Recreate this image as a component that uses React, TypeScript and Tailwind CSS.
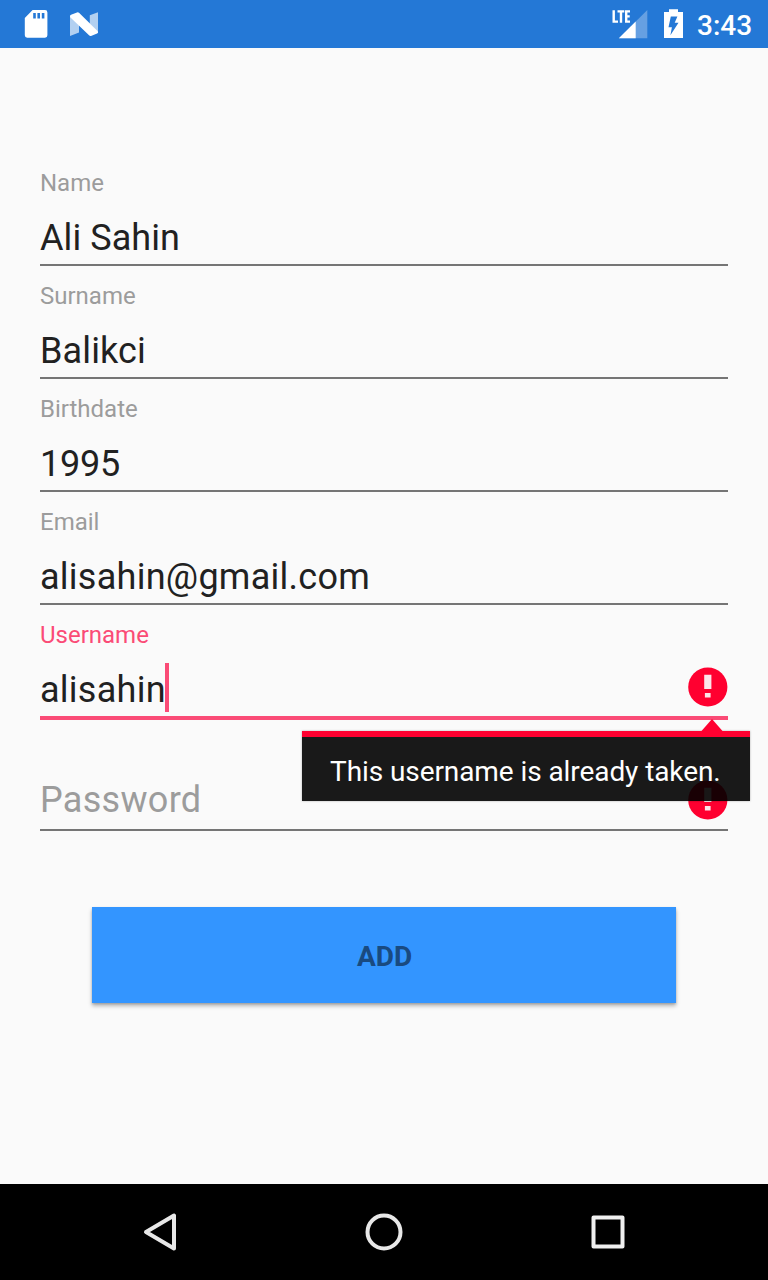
import React from "react";

function StatusBar() {
  return (
    <header className="flex h-12 shrink-0 items-center bg-[#2478d6] text-white">
      <svg className="h-12 w-[130px]" viewBox="0 0 130 48" aria-hidden="true">
        <path
          fill="#fff"
          fillRule="evenodd"
          d="M32.6 10H45a2.4 2.4 0 0 1 2.4 2.4v22.9a2.4 2.4 0 0 1-2.4 2.4H27.2a2.4 2.4 0 0 1-2.4-2.4V18zM33.2 13v5.4h2.6V13zm4.2 0v5.4H40V13zm4.4 0v5.4h2.6V13z"
        />
        <path fill="#fff" fillOpacity=".65" d="M70 16 79 25v7.4L70 36zM98 12.2v20.2L89.800 24v-8.700z" />
        <path fill="#fff" d="M70.200 17.200q-.9-1.700.8-2.500l6-2.300q1.200-.4 2 .4L97.800 31.200q.9 1.700-.7 2.400l-6.100 2.300q-1 .3-1.700-.4z" />
      </svg>
      <div className="flex-1" />
      <svg className="h-12 w-[97px]" viewBox="600 0 97 48" aria-hidden="true">
        <path fill="#fff" fillOpacity=".3" d="M647.300 10v28.200H619z" />
        <path fill="#fff" d="M635.700 21.600v16.600H618.800z" />
        <path
          fill="none"
          stroke="#fff"
          strokeWidth="2.400"
          d="M613.700 10.200v11.400h4.300M617.500 11.400h6.800M621 11.400v11.400M630 11.400h-3.800v10.200h3.800M626 16.400h3.700"
        />
        <path
          fill="#fff"
          fillRule="evenodd"
          d="M669 9.200h9v2.900h5V38h-19V12.100h5zM670.800 16.600l-2.300 10.600h3.400l-1.500 8 8.100-12.500h-3.800l2.700-6.100z"
        />
      </svg>
      <span className="relative top-[1px] w-[71px] text-[28px] leading-[33px] font-medium">3:43</span>
    </header>
  );
}

function ErrorIcon() {
  return (
    <svg className="absolute right-0 bottom-[9px] size-10" viewBox="0 0 40 40" aria-label="Error">
      <circle cx="19.800" cy="20" r="19.600" fill="#ff0030" />
      <path fill="#fde4e9" d="M16.200 7.800h7.200v14.200h-7.200zM16.900 26.100h5.700v4.400h-5.700z" />
    </svg>
  );
}

function Field({ label, value, tracking = "" }: { label: string; value: string; tracking?: string }) {
  return (
    <div className="h-[113px] border-b-2 border-[#757575] pt-4">
      <div className="text-[24px] leading-[28px] text-[#9c9c9c]">{label}</div>
      <div className={`mt-5 text-[36px] leading-[42px] text-[#212121] ${tracking}`}>{value}</div>
    </div>
  );
}

function ErrorPopup() {
  return (
    <div className="absolute top-[114px] -right-[22px] z-10 w-[448px]">
      <svg className="absolute top-0 right-[22px] h-3 w-[32px]" viewBox="0 0 32 12" aria-hidden="true">
        <path fill="#ff0030" d="M5.500 12 16 0l10.500 12z" />
      </svg>
      <div className="mt-3 h-[70px] border-t-[6px] border-[#ff0030] bg-black/90 bg-clip-padding pt-[18px] pl-7 text-[28px] leading-[33px] tracking-[-0.08px] whitespace-nowrap text-white shadow-[0_0_2px_rgba(0,0,0,0.3)]">
        This username is already taken.
      </div>
    </div>
  );
}

export default function App() {
  return (
    <div className="flex h-[1280px] w-[768px] flex-col overflow-hidden bg-[#fafafa] font-['Roboto',sans-serif]">
      <StatusBar />
      <main className="flex flex-1 flex-col px-10 pt-[105px]">
        <Field label="Name" value="Ali Sahin" tracking="tracking-[0.08px]" />
        <Field label="Surname" value="Balikci" tracking="tracking-[0.12px]" />
        <Field label="Birthdate" value="1995" tracking="tracking-[-0.25px]" />
        <Field label="Email" value="alisahin@gmail.com" tracking="tracking-[0.26px]" />
        <div className="relative h-[115px] border-b-4 border-[#fa4b76] pt-4">
          <div className="text-[24px] leading-[28px] text-[#fa4b76]">Username</div>
          <div className="mt-[14px] flex h-[49px]">
            <span className="pt-[6px] text-[36px] leading-[42px] tracking-[0.26px] text-[#212121]">alisahin</span>
            <span className="-ml-px h-[49px] w-1 bg-[#fa4b76]" />
          </div>
          <ErrorIcon />
          <ErrorPopup />
        </div>
        <div className="relative h-[111px] border-b-2 border-[#757575] pt-[59px]">
          <div className="text-[36px] leading-[42px] tracking-[0.3px] text-[#9c9c9c]">Password</div>
          <ErrorIcon />
        </div>
        <button className="mx-[52px] mt-[76px] flex h-24 items-center justify-center bg-[#3395ff] pt-1 pl-px text-[28px] font-bold text-[#194a80] shadow-[0_3px_4px_rgba(0,0,0,0.28),0_1px_2px_rgba(0,0,0,0.15)]">
          ADD
        </button>
      </main>
      <nav className="flex h-24 shrink-0 items-center justify-between bg-black px-[136px]">
        <svg className="size-12" viewBox="0 0 48 48" fill="none" stroke="#e8e8e8" strokeWidth="4" strokeLinejoin="round" aria-label="Back">
          <path d="M38 7.500v33L10 24z" />
        </svg>
        <svg className="size-12" viewBox="0 0 48 48" fill="none" stroke="#e8e8e8" strokeWidth="4" aria-label="Home">
          <circle cx="24" cy="24" r="16.500" />
        </svg>
        <svg className="size-12" viewBox="0 0 48 48" fill="none" stroke="#f0f0f0" strokeWidth="4" strokeLinejoin="round" aria-label="Overview">
          <path d="M9.500 9.500h29v29h-29z" />
        </svg>
      </nav>
    </div>
  );
}
